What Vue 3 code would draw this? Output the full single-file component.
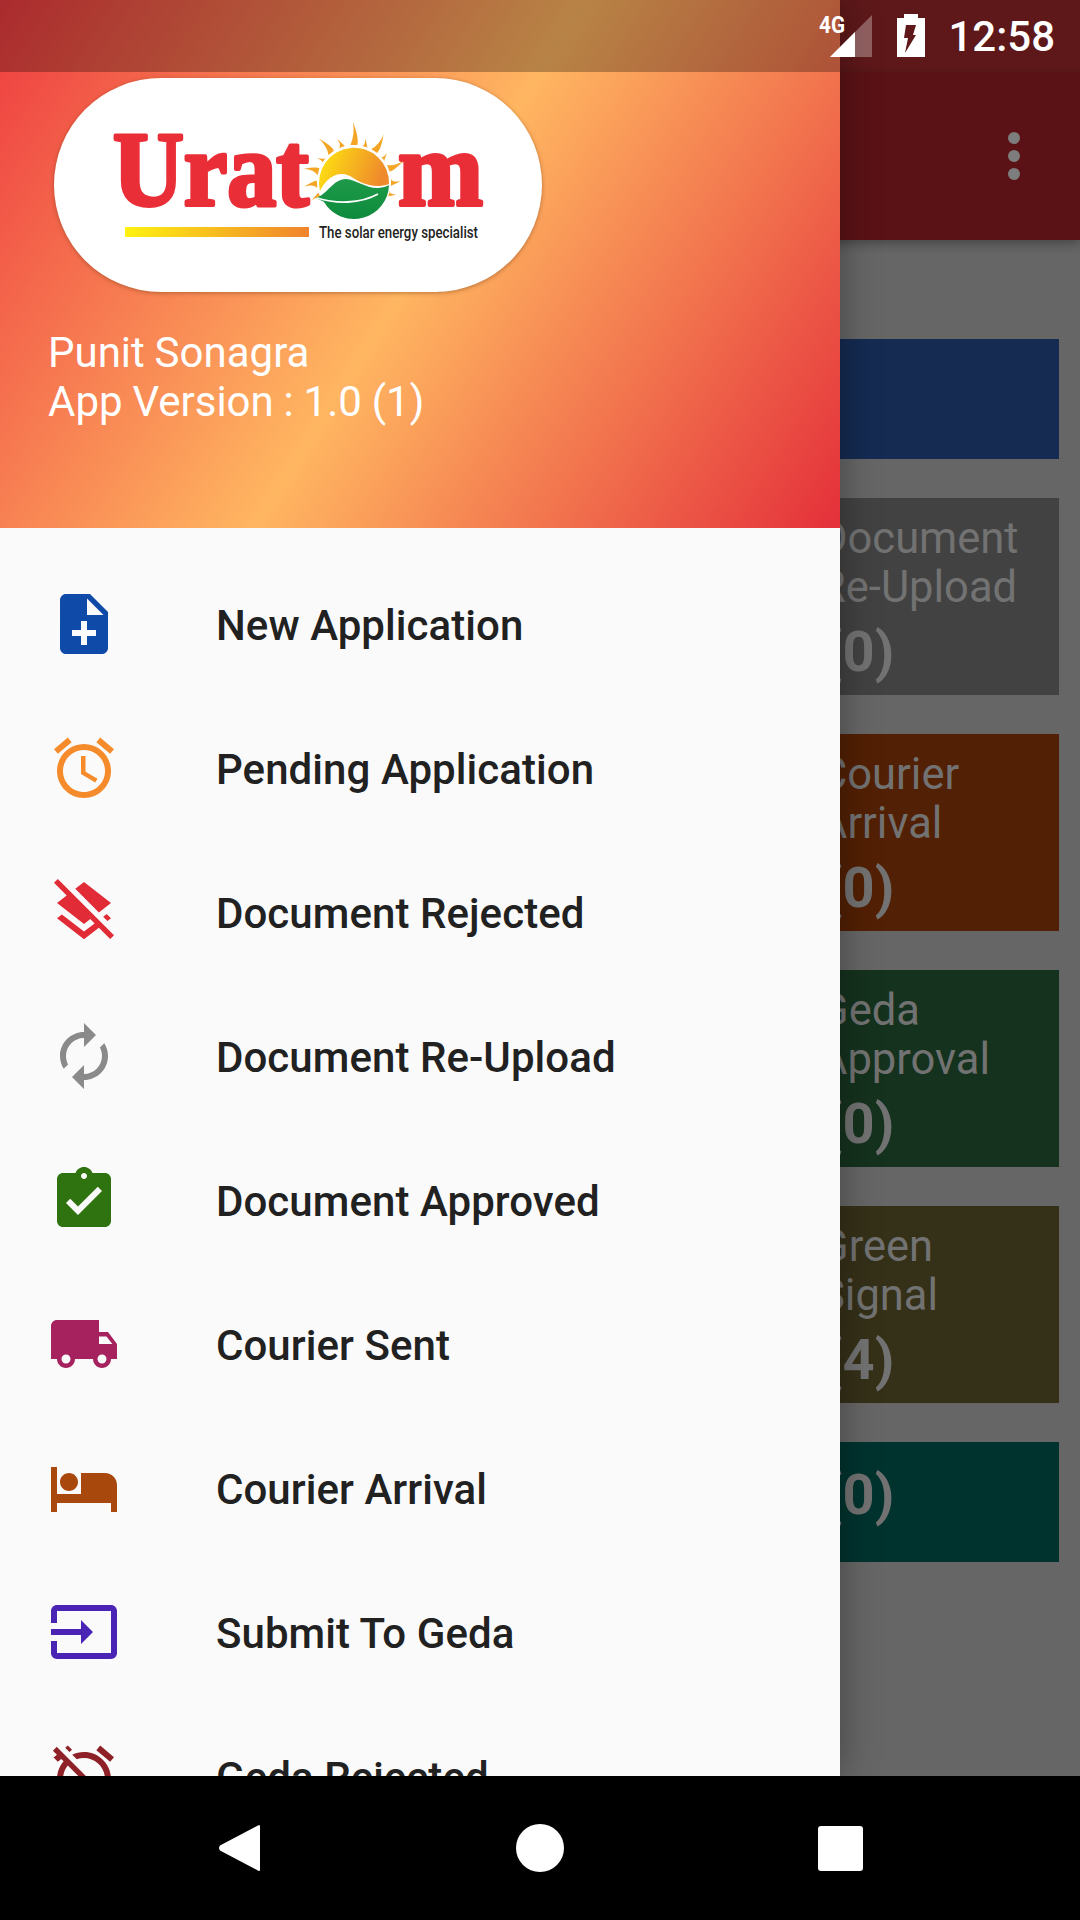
<script setup>
const menu = [
  { label: 'New Application', color: '#0f4aa8', d: 'M14 2H6c-1.1 0-1.99.9-1.99 2L4 20c0 1.1.89 2 1.99 2H18c1.1 0 2-.9 2-2V8l-6-6zm2 14h-3v3h-2v-3H8v-2h3v-3h2v3h3v2zm-3-7V3.5L18.5 9H13z' },
  { label: 'Pending Application', color: '#f58b2b', d: 'M22 5.72l-4.6-3.86-1.29 1.53 4.6 3.86L22 5.72zM7.88 3.39L6.6 1.86 2 5.71l1.29 1.53 4.59-3.85zM12.5 8H11v6l4.75 2.85.75-1.23-4-2.37V8zM12 4c-4.97 0-9 4.03-9 9s4.03 9 9 9 9-4.03 9-9-4.03-9-9-9zm0 16c-3.87 0-7-3.13-7-7s3.13-7 7-7 7 3.13 7 7-3.13 7-7 7z' },
  { label: 'Document Rejected', color: '#e12b36', d: 'M19.81 14.99l1.19-.92-1.43-1.43-1.19.92 1.43 1.43zM21 9l-9-7-2.91 2.27 7.87 7.88L21 9zM3.27 1L2 2.27l4.22 4.22L3 9l1.63 1.27L12 16l2.1-1.63 1.43 1.43L12 18.54l-7.37-5.73L3 14.07l9 7 4.95-3.85L20.73 21 22 19.73 3.27 1z' },
  { label: 'Document Re-Upload', color: '#8a8a8a', d: 'M12 6v3l4-4-4-4v3c-4.42 0-8 3.58-8 8 0 1.57.46 3.03 1.24 4.26L6.7 14.8c-.45-.83-.7-1.79-.7-2.8 0-3.31 2.69-6 6-6zm6.76 1.74L17.3 9.2c.44.84.7 1.79.7 2.8 0 3.31-2.69 6-6 6v-3l-4 4 4 4v-3c4.42 0 8-3.58 8-8 0-1.57-.46-3.03-1.24-4.26z' },
  { label: 'Document Approved', color: '#2f7210', d: 'M19 3h-4.18C14.4 1.84 13.3 1 12 1c-1.3 0-2.4.84-2.82 2H5c-1.1 0-2 .9-2 2v14c0 1.1.9 2 2 2h14c1.1 0 2-.9 2-2V5c0-1.1-.9-2-2-2zm-7 0c.55 0 1 .45 1 1s-.45 1-1 1-1-.45-1-1 .45-1 1-1zm-2 14l-4-4 1.41-1.41L10 14.17l6.59-6.59L18 9l-8 8z' },
  { label: 'Courier Sent', color: '#a5225e', d: 'M20 8h-3V4H3c-1.1 0-2 .9-2 2v11h2c0 1.66 1.34 3 3 3s3-1.34 3-3h6c0 1.66 1.34 3 3 3s3-1.34 3-3h2v-5l-3-4zM6 18.5c-.83 0-1.5-.67-1.5-1.5s.67-1.5 1.5-1.5 1.5.67 1.5 1.5-.67 1.5-1.5 1.5zm13.5-9l1.96 2.5H17V9.5h2.5zm-1.5 9c-.83 0-1.5-.67-1.5-1.5s.67-1.5 1.5-1.5 1.5.67 1.5 1.5-.67 1.5-1.5 1.5z' },
  { label: 'Courier Arrival', color: '#a9480c', d: 'M7 13c1.66 0 3-1.34 3-3S8.66 7 7 7s-3 1.34-3 3 1.34 3 3 3zm12-6h-8v7H3V5H1v15h2v-3h18v3h2v-9c0-2.21-1.79-4-4-4z' },
  { label: 'Submit To Geda', color: '#4a25b5', d: 'M21 3.01H3c-1.1 0-2 .9-2 2V9h2V4.99h18v14.03H3V15H1v4.01c0 1.1.9 1.98 2 1.98h18c1.1 0 2-.88 2-1.98v-14c0-1.11-.9-2-2-2zM11 16l4-4-4-4v3H1v2h10v3z' },
  { label: 'Geda Rejected', color: '#8e2127', d: 'M12 6c3.87 0 7 3.13 7 7 0 .84-.16 1.65-.43 2.4l1.52 1.52c.58-1.19.91-2.51.91-3.92 0-4.97-4.03-9-9-9-1.41 0-2.73.33-3.92.91L9.6 6.43C10.35 6.16 11.16 6 12 6zm10-.28l-4.6-3.86-1.29 1.53 4.6 3.86L22 5.72zM2.92 2.29L1.65 3.57 2.98 4.9l-1.11.93 1.42 1.42 1.11-.94.8.8C3.83 8.69 3 10.75 3 13c0 4.97 4.03 9 9 9 2.25 0 4.31-.83 5.89-2.2l2.2 2.2 1.27-1.27L3.89 3.27l-.97-.98zm13.55 16.1C15.26 19.39 13.7 20 12 20c-3.87 0-7-3.13-7-7 0-1.7.61-3.26 1.61-4.47l9.86 9.86zM8.02 3.28L6.6 1.86l-.86.71 1.42 1.42.86-.71z' },
]

const cards = [
  { cls: 'blue short', lines: [] },
  { cls: 'grey', lines: ['Document', 'Re-Upload'], count: '(0)' },
  { cls: 'orange', lines: ['Courier', 'Arrival'], count: '(0)' },
  { cls: 'green', lines: ['Geda', 'Approval'], count: '(0)' },
  { cls: 'olive', lines: ['Green', 'Signal'], count: '(4)' },
  { cls: 'teal short', lines: [], count: '(0)' },
]

const rays = [
  [-74, 52], [-56, 44], [-38, 56], [-20, 46], [0, 60], [16, 45], [33, 56], [50, 44], [68, 54],
  [90, 47], [-94, 50], [-112, 46], [108, 44],
]
</script>

<template>
  <div class="screen">
    <div class="main">
      <div class="page">
        <div class="page-status"></div>
        <div class="toolbar">
          <span class="dot"></span>
          <span class="dot"></span>
          <span class="dot"></span>
        </div>
        <div class="cards">
          <div v-for="(card, i) in cards" :key="i" class="card" :class="card.cls">
            <div v-for="line in card.lines" :key="line" class="card-line">{{ line }}</div>
            <div v-if="card.count" class="card-count">{{ card.count }}</div>
          </div>
        </div>
      </div>

      <aside class="drawer">
        <header class="head">
          <div class="status-scrim"></div>
          <div class="logo">
            <svg width="488" height="214" viewBox="0 0 488 214">
              <defs>
                <linearGradient id="sunGrad" x1="0" y1="0" x2="1" y2="0.25">
                  <stop offset="0" stop-color="#ffe80f" />
                  <stop offset="1" stop-color="#ef8a2c" />
                </linearGradient>
                <linearGradient id="leafGrad" x1="0" y1="0" x2="0" y2="1">
                  <stop offset="0" stop-color="#1f9a4a" />
                  <stop offset="1" stop-color="#0d8a3c" />
                </linearGradient>
                <linearGradient id="barGrad" x1="0" y1="0" x2="1" y2="0">
                  <stop offset="0" stop-color="#fff210" />
                  <stop offset="1" stop-color="#f0832d" />
                </linearGradient>
              </defs>
              <text class="brand" x="59" y="127" textLength="196" lengthAdjust="spacingAndGlyphs">Urat</text>
              <text class="brand" x="344" y="127" textLength="85" lengthAdjust="spacingAndGlyphs">m</text>
              <circle cx="300" cy="104" r="38" fill="#fff" />
              <g transform="translate(300 104)">
                <path v-for="(r, i) in rays" :key="i" :transform="`rotate(${r[0]})`" :d="`M-3.5 -37 Q 1 ${-r[1] * 0.8} -1 ${-r[1]} Q 5 ${-r[1] * 0.75} 3.5 -37 Z`" fill="#f5a526" />
              </g>
              <path d="M266 113 A35 35 0 1 1 335 106 C320 111 308 106 296 98 C284 92 272 100 266 113 Z" fill="url(#sunGrad)" />
              <path d="M262 120 C274 116 279 101 292 101 C305 102 318 116 335 107 A35 35 0 0 1 270 124 C267 122 264 121 262 120 Z" fill="url(#leafGrad)" />
              <path d="M263 120 C282 126 306 126 324 116" fill="none" stroke="#fff" stroke-width="1.8" />
              <rect x="71" y="149" width="184" height="10" fill="url(#barGrad)" />
              <text class="tagline" x="265" y="160" textLength="159" lengthAdjust="spacingAndGlyphs">The solar energy specialist</text>
            </svg>
          </div>
          <div class="user">
            <div>Punit Sonagra</div>
            <div>App Version : 1.0 (1)</div>
          </div>
        </header>
        <nav class="list">
          <div v-for="item in menu" :key="item.label" class="row">
            <svg class="row-icon" width="72" height="72" viewBox="0 0 24 24">
              <path :d="item.d" :fill="item.color" />
            </svg>
            <span class="row-label">{{ item.label }}</span>
          </div>
        </nav>
      </aside>

      <div class="status">
        <svg class="signal" width="53" height="50" viewBox="0 0 53 50">
          <path d="M53 6V48H11Z" fill="#fff" opacity="0.3" />
          <path d="M36 23V48H11Z" fill="#fff" />
          <text class="net" x="0" y="24" textLength="26" lengthAdjust="spacingAndGlyphs">4G</text>
        </svg>
        <svg class="battery" width="28" height="43" viewBox="0 0 28 43">
          <path d="M7 0H21V4H28V43H0V4H7Z" fill="#fff" />
          <path d="M9 11H19L16 21H19L8 39L11 24H7Z" fill="#5e181a" />
        </svg>
        <span class="clock">12:58</span>
      </div>
    </div>

    <div class="navbar">
      <svg width="41" height="48" viewBox="0 0 41 48">
        <path d="M39 1.5 C40 0.5 41 1 41 2.5 V45.5 C41 47 40 47.5 39 46.5 L1 26.5 C-0.3 25 -0.3 23 1 21.5 Z" fill="#fff" />
      </svg>
      <span class="home"></span>
      <span class="recent"></span>
    </div>
  </div>
</template>

<style>
html, body { margin: 0; padding: 0; background: #000; }
</style>

<style scoped>
.screen {
  width: 1080px;
  height: 1920px;
  display: flex;
  flex-direction: column;
  overflow: hidden;
  font-family: Roboto, "Liberation Sans", sans-serif;
}
.main {
  position: relative;
  height: 1776px;
  overflow: hidden;
  flex: none;
}
.page {
  height: 100%;
  background: #666;
}
.page-status {
  height: 72px;
  background: #5e181a;
}
.toolbar {
  height: 168px;
  background: #5a1216;
  box-shadow: 0 4px 10px rgba(0, 0, 0, 0.3);
  display: flex;
  flex-direction: column;
  align-items: flex-end;
  justify-content: center;
  gap: 6px;
  padding-right: 60px;
  box-sizing: border-box;
  position: relative;
}
.dot {
  width: 12px;
  height: 12px;
  border-radius: 50%;
  background: #7d7d7d;
}
.cards {
  display: flex;
  flex-direction: column;
  gap: 39.5px;
  width: 260px;
  margin: 99px 21px 0 auto;
}
.card {
  height: 196.5px;
  box-sizing: border-box;
  padding: 15.5px 0 0 20px;
  color: #727272;
  font-size: 43.5px;
  line-height: 49px;
}
.card.short {
  height: 119.5px;
  padding-top: 18px;
}
.card-count {
  margin-left: 4px;
  font-size: 56px;
  font-weight: 700;
  line-height: 70px;
  padding-top: 5px;
}
.blue { background: #152b52; }
.grey { background: #424242; }
.orange { background: #522004; }
.green { background: #15321e; }
.olive { background: #353018; }
.teal { background: #00332e; }
.short .card-count { padding-top: 0; }

.drawer {
  position: absolute;
  left: 0;
  top: 0;
  width: 840px;
  height: 100%;
  background: #fafafa;
  overflow: hidden;
  box-shadow: 0 0 36px rgba(0, 0, 0, 0.35);
}
.head {
  position: relative;
  height: 528px;
  box-sizing: border-box;
  padding: 78px 0 0 54px;
  background: linear-gradient(122.15deg, #ee3c40 0%, #ffb661 50%, #e4303a 100%);
}
.status-scrim {
  position: absolute;
  left: 0;
  top: 0;
  right: 0;
  height: 72px;
  background: rgba(0, 0, 0, 0.28);
}
.logo {
  width: 488px;
  height: 214px;
  border-radius: 107px;
  background: #fff;
  box-shadow: 0 1px 4px rgba(120, 60, 20, 0.5);
}
.logo svg { display: block; }
.brand {
  font-family: "Liberation Serif", serif;
  font-weight: 700;
  font-size: 106px;
  fill: #ea2e38;
  stroke: #ea2e38;
  stroke-width: 4px;
  stroke-linejoin: round;
}
.tagline {
  font-family: Roboto, sans-serif;
  font-weight: 500;
  font-size: 16px;
  fill: #232323;
}
.user {
  margin: 36px 0 0 -6px;
  color: #fff;
  font-size: 42px;
  line-height: 49px;
  word-spacing: -0.6px;
}
.list {
  padding-top: 24px;
}
.row {
  height: 144px;
  display: flex;
  align-items: center;
  padding-left: 48px;
}
.row-icon { flex: none; }
.row-label {
  margin: 2px 0 0 96px;
  color: #212121;
  font-size: 42px;
  font-weight: 500;
  letter-spacing: 0.06px;
}

.status {
  position: absolute;
  top: 0;
  right: 0;
  height: 72px;
  display: flex;
  align-items: flex-start;
  padding-right: 25px;
  color: #fff;
}
.signal { margin-top: 9px; }
.battery { margin: 14px 23px 0 25px; }
.clock {
  font-size: 42px;
  font-weight: 500;
  line-height: 74px;
}
.net {
  font-family: Roboto, sans-serif;
  font-weight: 700;
  font-size: 23px;
  fill: #fff;
}
.navbar {
  flex: 1;
  background: #000;
  display: flex;
  align-items: center;
  gap: 256px;
  padding-left: 219px;
}
.home {
  width: 48px;
  height: 48px;
  border-radius: 50%;
  background: #fff;
}
.recent {
  width: 45px;
  height: 45px;
  margin-left: -2px;
  border-radius: 3px;
  background: #fff;
}
</style>
